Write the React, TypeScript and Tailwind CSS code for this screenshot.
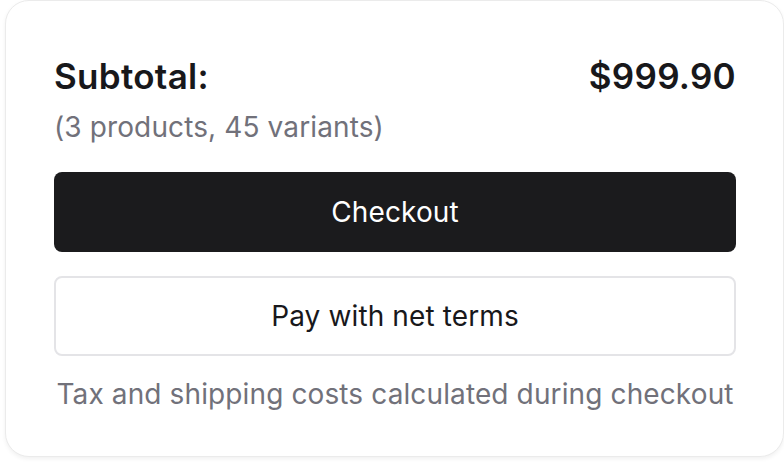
import React from 'react';

const App = () => {
  return (
    <div className="w-[784px] h-[464px] bg-white overflow-hidden" style={{ fontFamily: 'Inter, "Noto Sans", sans-serif' }}>
      <div className="ml-[5px] w-[779px] h-[457px] rounded-[24px] border border-[#ebebeb] bg-white shadow-[0_2px_4px_rgba(0,0,0,0.06)] pl-[48px] pr-[47px] pt-[55px]">
        <div className="flex items-center justify-between h-[40px]">
          <span className="text-[35px] font-semibold text-[#18181b] leading-[40px] tracking-[0.3px]">Subtotal:</span>
          <span className="text-[35px] font-semibold text-[#18181b] leading-[40px] tracking-[0.3px]">$999.90</span>
        </div>
        <p className="mt-[15px] text-[28px] leading-[32px] text-[#71717a] tracking-[0.12px]">(3 products, 45 variants)</p>
        <button className="mt-[29px] w-full h-[80px] rounded-[8px] bg-[#1b1b1d] text-white text-[28px] font-normal tracking-[0.12px]">
          Checkout
        </button>
        <button className="mt-[24px] w-full h-[80px] rounded-[8px] border-2 border-[#e4e4e7] bg-white text-[#18181b] text-[28px] font-normal tracking-[0.12px]">
          Pay with net terms
        </button>
        <p className="mt-[22px] text-center text-[28px] leading-[32px] text-[#71717a] tracking-[0.12px]">
          Tax and shipping costs calculated during checkout
        </p>
      </div>
    </div>
  );
};

export default App;
